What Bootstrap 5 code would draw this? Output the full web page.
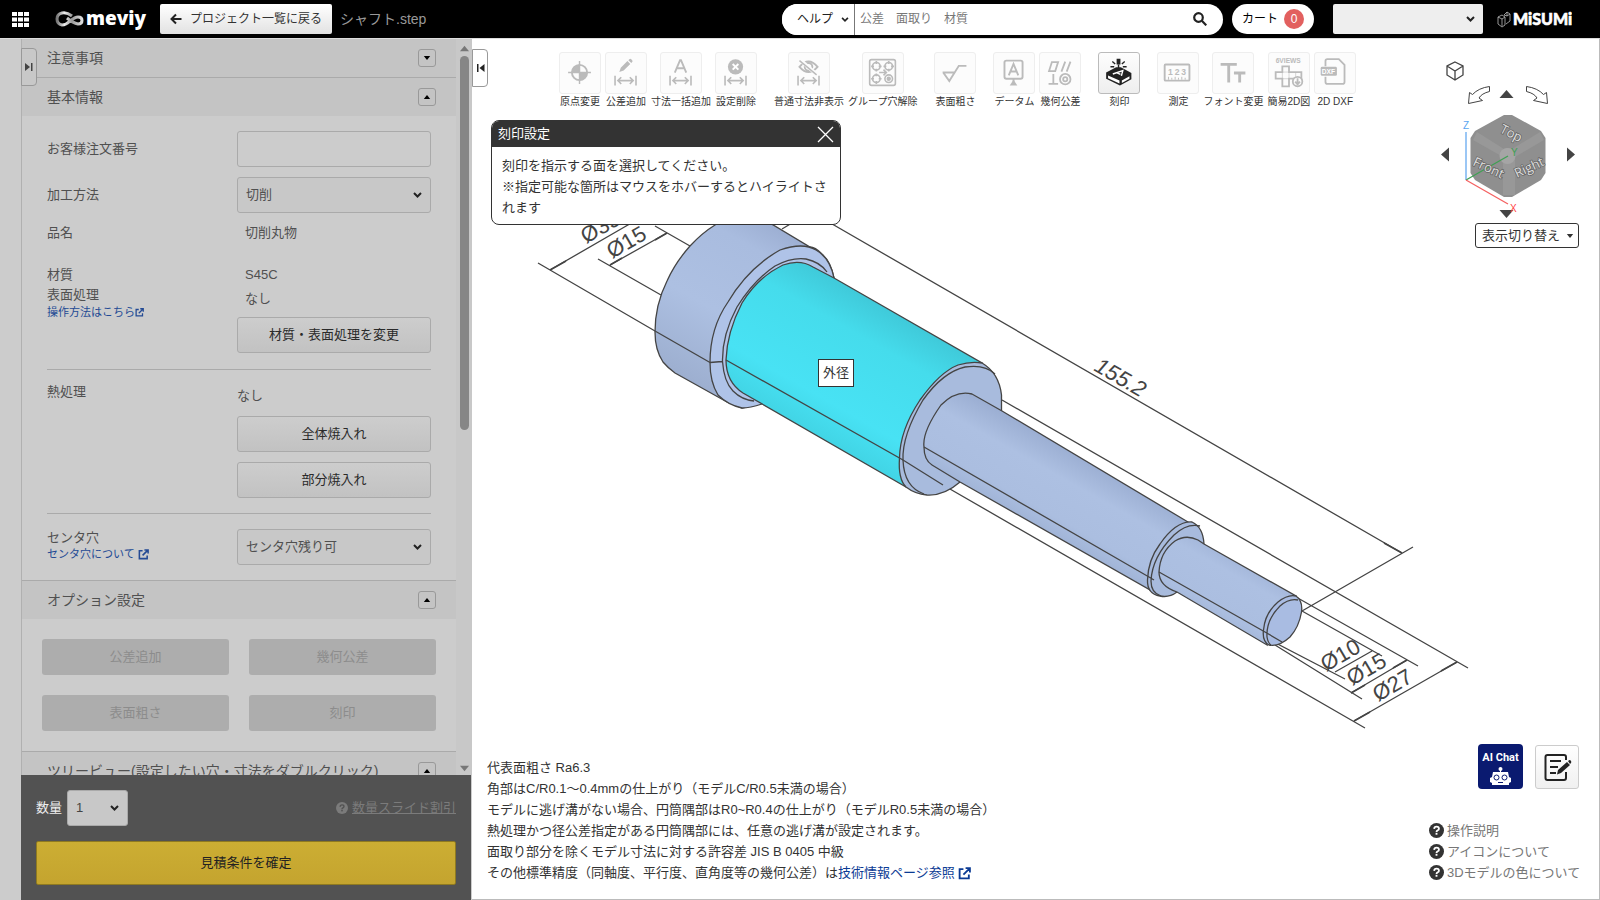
<!DOCTYPE html>
<html lang="ja">
<head>
<meta charset="utf-8">
<meta name="viewport" content="width=device-width, initial-scale=1">
<title>meviy - シャフト.step</title>
<link href="https://cdn.jsdelivr.net/npm/bootstrap@5.3.0/dist/css/bootstrap.min.css" rel="stylesheet">
<style>
body{font-family:"Liberation Sans","Noto Sans CJK JP",sans-serif;font-size:13px;line-height:20px;color:#333;background:#fff}
button,select,input{font-family:inherit}
svg{display:block;flex:none}
.topbar{height:38px;background:#000;padding:0 28px 0 12px}
.brand-logo{margin:0 12px 0 24px}
.back-btn{height:30px;padding:0 10px;font-size:12px;line-height:20px;border:0;border-radius:2px;background:linear-gradient(#fff,#e2e2e2);color:#333}
.file-title{font-size:14px;color:#999}
.search-pill{width:441px;height:31px;border-radius:16px;background:#fff;overflow:hidden;margin-right:9px}
.help-select{width:73px;padding:0 20px 0 15px;border:0;border-right:1px solid #777;border-radius:0;background-color:#fff;font-size:12px;color:#222}
.search-text{padding:0 5px;font-size:12px;color:#333}
.search-text::placeholder{color:#777}
.cart-btn{height:30px;width:82px;border-radius:15px;background:#fff;padding:0 10px;border:0;margin-right:19px;font-size:12px;line-height:20px}
.cart-count{width:20px;height:20px;border-radius:50%;background:#e2605f;color:#fff;font-size:12px;line-height:20px}
.chev{appearance:none;background-repeat:no-repeat;background-position:right 8px center;background-size:9px 6px;background-image:url("data:image/svg+xml,%3Csvg xmlns='http://www.w3.org/2000/svg' viewBox='0 0 9 6'%3E%3Cpath d='M1 1l3.500 3.500L8 1' fill='none' stroke='%23222' stroke-width='2'/%3E%3C/svg%3E")}
.user-select-box{width:150px;height:30px;border-radius:2px;background-color:#eee;margin-right:14px;padding:0 10px}
.help-select.chev{background-position:right 5px center;background-size:8px 5px}
.side-col{flex:0 0 472px;padding-left:21px;background:#ccc;border-top:1px solid #ddd;position:relative}
.side-scroll{border-left:1px solid #b0b0b0;overflow:hidden;min-height:0}
.sec-head{height:39px;border-top:1px solid #aaa;background:#c4c4c4;padding:0 20px 0 25px;font-size:14px;color:#505050}
.sec-head:first-child{height:38px;border-top:0}
.fold-btn{width:18px;height:18px;padding:0;border:1px solid #999;border-radius:3px;background:transparent}
.fold-btn svg{margin:auto}
.sec-body{padding:15px 25px;color:#505050}
.field-stack{gap:10px}
.lab-col{flex:0 0 190px}
.material-row{padding:22px 0 16px}
.heat-row{padding:12px 0 15px}
.center-row{padding-top:15px}
.center-row label{line-height:18px}
.ctl{height:36px;border:1px solid #aaa;border-radius:3px;font-size:13px;line-height:20px;padding:0 8px;width:100%;color:#505050;background-color:#ccc}
.ctl.chev{background-color:#c8c8c8}
.side-btn{color:#2a2a2a;background:linear-gradient(#cdcdcd,#c2c2c2)}
.opt-grid{grid-template-columns:1fr 1fr;gap:20px;padding:20px}
.opt-btn{height:36px;border:0;border-radius:3px;background:#adadad;color:#8c8c8c;font-size:13px;line-height:20px}
.small-link{font-size:11px;line-height:14px;color:#234a94;text-decoration:none;gap:3px}
.small-link.tight{gap:0}
.rule{height:1px;background:#aaa}
.track{width:16px;background:#c8c8c8;padding:6px 0 3px;color:#777}
.thumb{width:9px;height:374px;border-radius:5px;background:#868686;margin:4px 0 auto}
.side-tab,.main-tab{position:absolute;width:16px;height:38px;border:1px solid #999;border-radius:0 4px 4px 0;padding:0}
.side-tab{left:21px;top:9px;background:#c8c8c8}
.main-tab{left:0;top:10px;background:#fff;z-index:3}
.quote-bar{background:#525252;padding:15px;color:#eee;height:125px;margin-right:1px}
.qty-box{width:61px;color:#444;margin-left:5px}
.slide-link{color:#7b7b7b}
.quote-btn{height:44px;border:1px solid #8f7a20;border-radius:2px;background:linear-gradient(#ccae33,#c4a42f);color:#222;font-size:13px;line-height:20px}
.fill-rest{min-height:0}
.viewer{border:1px solid #bbb;border-left:0;border-top-color:#ddd;min-width:0}
.model-canvas{position:absolute;inset:0;width:100%;height:100%}
.tools{padding:13px 0 0 87px;gap:17px;position:relative}
.tools>div{gap:4px}
.tool{background:none;border:0;padding:0;font-size:10px;line-height:15px;color:#333;min-width:42px;white-space:nowrap}
.tool svg{width:42px;height:42px;border:1px solid #eee;border-radius:3px;background:#fcfcfc;color:#bbb;margin:0 auto}
.tool.on svg{border-color:#bbb;background:linear-gradient(#fdfdfd,#eee);color:#222}
.engrave{position:absolute;left:19px;top:81px;width:350px;border:1px solid #333;border-radius:8px;background:#fff;overflow:hidden;z-index:2}
.engrave-head{height:26px;background:#333;color:#fff;padding:0 6px}
.engrave p{padding:8px 10px 6px;line-height:21px}
.part-tip{position:absolute;left:346px;top:320px;width:36px;border:1px solid #333;background:#fff;padding:2px 4px;line-height:22px;z-index:1}
.nav-cube{position:absolute;right:20px;top:12px;width:140px}
.view-btn{height:25px;width:104px;border:1px solid #333;border-radius:3px;background:#fff;font-size:13px;line-height:20px;padding:0 4px 0 6px;color:#333}
.notes{line-height:21px;padding:0 0 16px 15px;position:relative}
.notes a{color:#0b3b94;text-decoration:none}
.corner{padding:0 20px 16px 0;position:relative;gap:31px}
.corner-btns{gap:12px}
.ai-btn{width:45px;height:45px;border:0;border-radius:4px;background:#0a1a70;color:#fff;padding:0}
.memo-btn{width:44px;height:44px;border:1px solid #ccc;border-radius:3px;background:linear-gradient(#fff,#f0f0f0);padding:0}
.guide{width:150px;line-height:21px}
.guide a{color:#777;text-decoration:none;gap:3px;white-space:nowrap}
.guide svg{color:#333}
</style>
</head>
<body class="d-flex flex-column vh-100 overflow-hidden">
<svg class="d-none">
<symbol id="ext" viewBox="0 0 12 12"><path d="M5 2H1.500v8.500H10V7M7 1h4v4M11 1L5 7" fill="none" stroke="currentColor" stroke-width="1.700"/></symbol>
<symbol id="up" viewBox="0 0 8 5"><path d="M0 5L4 0l4 5z" fill="currentColor"/></symbol>
<symbol id="down" viewBox="0 0 8 5"><path d="M0 0l4 5 4-5z" fill="currentColor"/></symbol>
<symbol id="help" viewBox="0 0 16 16"><circle cx="8" cy="8" r="8" fill="currentColor"/><path d="M5.500 6.300q.1-2.500 2.600-2.500t2.500 2.200q0 1.100-1.300 1.800T8 9.500" fill="none" stroke="var(--q,#fff)" stroke-width="1.900"/><rect x="7" y="10.500" width="2" height="2" fill="var(--q,#fff)"/></symbol>
<symbol id="span" viewBox="0 0 42 42"><path d="M9.500 24v10M31.500 24v10M12 29h17M16 25.500L12.500 29l3.500 3.500M25 25.500l3.500 3.500-3.500 3.500" fill="none" stroke="currentColor" stroke-width="1.700"/></symbol>
</svg>

<header class="topbar d-flex align-items-center flex-shrink-0">
<svg width="17" height="15" viewBox="0 0 17 15" fill="#fff"><path d="M0 0h5v4H0zM6 0h5v4H6zM12 0h5v4h-5zM0 5.500h5v4H0zM6 5.500h5v4H6zM12 5.500h5v4h-5zM0 11h5v4H0zM6 11h5v4H6zM12 11h5v4h-5z"/></svg>
<svg class="brand-logo" width="95" height="30" viewBox="53 4 95 30"><defs><linearGradient id="lg"><stop stop-color="#777"/><stop offset=".3" stop-color="#eee"/><stop offset=".6" stop-color="#999"/><stop offset="1" stop-color="#ddd"/></linearGradient></defs><path d="M72 16q-5-4-10-3-5 1-5 6t5 6q4 0 8-4 5-4 8-4 4 0 4 3.500T78 24q-5-1-11-6" fill="none" stroke="url(#lg)" stroke-width="3"/><text x="86" y="25" fill="#fff" font-family="Open Sans" font-size="19" font-weight="800">meviy</text></svg>
<button class="back-btn d-flex align-items-center gap-2" type="button"><svg width="12" height="12" viewBox="0 0 12 12"><path d="M11.500 6H2M6 1.500L1.500 6 6 10.500" fill="none" stroke="#222" stroke-width="2"/></svg>プロジェクト一覧に戻る</button>
<span class="file-title ms-2">シャフト.step</span>
<form class="search-pill d-flex align-items-center ms-auto">
<select class="help-select chev h-100" aria-label="ヘルプ"><option>ヘルプ</option></select>
<input class="search-text border-0 h-100 flex-grow-1" aria-label="検索" placeholder="公差　面取り　材質">
<button type="button" class="border-0 bg-transparent p-0 me-3" aria-label="検索"><svg width="14" height="14" viewBox="0 0 14 14" fill="none" stroke="#222" stroke-width="2.200"><circle cx="5.500" cy="5.500" r="4.300"/><path d="M8.800 8.800l4.500 4.500"/></svg></button>
</form>
<button type="button" class="cart-btn d-flex align-items-center justify-content-between">カート<span class="cart-count">0</span></button>
<select class="user-select-box chev border-0" aria-label="ユーザー"><option></option></select>
<svg width="75" height="18" viewBox="0 0 75 18"><g fill="none" stroke="#bbb" stroke-width=".8"><path d="M1 7l4-2 3 2v8l-3 2-4-3zM5 9v7M1 7l4 2 3-2M7 5l3-3 3 2v7l-4 3M10 6V2M7 5l3 1 3-2"/></g><text x="16" y="15" fill="#fff" stroke="#fff" stroke-width=".6" font-family="Lato" font-size="16" font-weight="900">MiSUMi</text></svg>
</header>

<div class="d-flex flex-grow-1 fill-rest">
<aside class="side-col d-flex flex-column">
<button class="side-tab" type="button" aria-label="折りたたむ"><svg class="mx-auto" width="8" height="8" viewBox="0 0 8 8" fill="#444"><path d="M0 0l5 4-5 4zM6 0h1.500v8H6z"/></svg></button>
<div class="d-flex flex-grow-1 fill-rest">
<div class="side-scroll flex-grow-1">
<div class="sec-head d-flex align-items-center justify-content-between">注意事項<button class="fold-btn" type="button" aria-label="開く"><svg width="8" height="4"><use href="#down"/></svg></button></div>
<div class="sec-head d-flex align-items-center justify-content-between">基本情報<button class="fold-btn" type="button" aria-label="閉じる"><svg width="8" height="4"><use href="#up"/></svg></button></div>
<div class="sec-body">
<div class="field-stack d-flex flex-column">
<div class="d-flex align-items-center"><label class="lab-col" for="orderNo">お客様注文番号</label><input id="orderNo" class="ctl"></div>
<div class="d-flex align-items-center"><label class="lab-col" for="method">加工方法</label><select id="method" class="ctl chev"><option>切削</option></select></div>
<div class="d-flex"><span class="lab-col">品名</span><span class="ps-2">切削丸物</span></div>
</div>
<div class="material-row d-flex">
<div class="lab-col"><div>材質</div><div>表面処理</div><a href="#" class="small-link tight d-flex align-items-center">操作方法はこちら<svg width="9" height="9"><use href="#ext"/></svg></a></div>
<div class="flex-grow-1"><div class="ps-2">S45C</div><div class="ps-2 pt-1">なし</div><button class="ctl side-btn mt-2" type="button">材質・表面処理を変更</button></div></div>
<div class="rule"></div>
<div class="heat-row d-flex">
<div class="lab-col">熱処理</div>
<div class="field-stack d-flex flex-column flex-grow-1"><div class="pt-1">なし</div><button class="ctl side-btn" type="button">全体焼入れ</button><button class="ctl side-btn" type="button">部分焼入れ</button></div></div>
<div class="rule"></div>
<div class="center-row d-flex"><div class="lab-col"><label for="center" class="d-block">センタ穴</label><a href="#" class="small-link d-flex align-items-center">センタ穴について<svg width="11" height="11"><use href="#ext"/></svg></a></div>
<select id="center" class="ctl chev"><option>センタ穴残り可</option></select></div>
</div>
<div class="sec-head d-flex align-items-center justify-content-between">オプション設定<button class="fold-btn" type="button" aria-label="閉じる"><svg width="8" height="4"><use href="#up"/></svg></button></div>
<div class="opt-grid d-grid">
<button class="opt-btn" disabled>公差追加</button><button class="opt-btn" disabled>幾何公差</button><button class="opt-btn" disabled>表面粗さ</button><button class="opt-btn" disabled>刻印</button></div>
<div class="sec-head d-flex align-items-center justify-content-between">ツリービュー(設定したい穴・寸法をダブルクリック)<button class="fold-btn" type="button" aria-label="閉じる"><svg width="8" height="4"><use href="#up"/></svg></button></div>
</div>
<div class="track d-flex flex-column align-items-center"><svg width="9" height="7"><use href="#up"/></svg><div class="thumb"></div><svg width="9" height="7"><use href="#down"/></svg></div>
</div>
<div class="quote-bar d-flex flex-column flex-shrink-0 justify-content-between">
<div class="d-flex align-items-center"><label for="qty">数量</label><select id="qty" class="ctl chev qty-box"><option>1</option></select>
<a href="#" class="slide-link ms-auto d-flex align-items-center gap-1"><svg width="12" height="12" style="--q:#525252"><use href="#help"/></svg>数量スライド割引</a></div>
<button class="quote-btn w-100" type="button">見積条件を確定</button>
</div>
</aside>

<main class="viewer position-relative flex-grow-1 d-flex flex-column">
<svg class="model-canvas" viewBox="472 39 1127 860" preserveAspectRatio="xMinYMin meet" fill="none" stroke="#444" stroke-width="1.300">
<defs>
<linearGradient id="gh" gradientUnits="userSpaceOnUse" x1="770" y1="215" x2="680" y2="375"><stop stop-color="#9aacd0"/><stop offset=".2" stop-color="#a9bcdf"/><stop offset=".6" stop-color="#adc0e2"/><stop offset="1" stop-color="#9dafd0"/></linearGradient>
<linearGradient id="gc" gradientUnits="userSpaceOnUse" x1="905" y1="315" x2="825" y2="455"><stop stop-color="#3fc8d8"/><stop offset=".25" stop-color="#45dcec"/><stop offset=".7" stop-color="#48e2f4"/><stop offset="1" stop-color="#3fd0e0"/></linearGradient>
<linearGradient id="gs" gradientUnits="userSpaceOnUse" x1="1086" y1="460" x2="1041" y2="540"><stop stop-color="#9cafd3"/><stop offset=".3" stop-color="#adc0e2"/><stop offset=".7" stop-color="#abbee0"/><stop offset="1" stop-color="#9bafd2"/></linearGradient>
</defs>
<!-- extension and dimension lines -->
<path d="M538 263l117 68M598 259l63 36M550 270l90-52M610 265l57-32M655 226l35 20M782 229l20-12M820 217l582 336M1413 547L1302 611M1002 400l466 268M1302 611l80 45M1296 597l122 69M1335 672l37-21M1351 693l56-33M1354 721l103-59M943 485l422 243M1270 640l75 39M1275 645l87 54"/>
<path d="M550 270l16-9M610 265l12-7M655 240l12-7M1402 553l-18-10M1354 721l16-9M1457 662l-16 9M1351 693l14-8M1407 660l-14 8" stroke-width="1.600"/>
<!-- head -->
<path d="M715 225Q702 233 690 246Q675 263 667 281Q655 305 655 332Q655 350 663 362Q668 368 675 373L727 402L742 408L760 404L834 278Q831 262 822 254Q815 247 810 247L760 217H725z" fill="url(#gh)"/>
<path d="M710 362.500Q710 328 728 302Q748 268 780 250Q803 242 816 250Q830 258 834 278L762 404Q750 408 742 408Q728 405 718 395Q710 382 710 362.500z" fill="#afc3e8"/>
<path d="M722.500 361.500Q722 335 737 307Q754 280 775 266Q792 257 806 259Q820 262 827 272M722.500 361.500Q724 382 733 391Q742 400 754 401M710 362.500l12-1" />
<path d="M655 331l55 31.500"/>
<!-- highlighted outer diameter -->
<path d="M726 360Q727 332 742 303Q758 277 783 265Q800 259 813 267L834 278L982 363L960 372L900 455L906 487L743 393Q726 382 726 360z" fill="url(#gc)"/>
<path d="M982 363Q999 373 1001.500 395V412L960 482Q944 496 927 495Q915 494 906 487Q898 479 899.500 458Q900 430 920 400Q940 372 958 365Q971 361 982 363z" fill="#a8bbdd"/>
<path d="M903 460Q902 435 923 400Q943 372 965 367Q985 364 995 374M903 460Q904 487 924 494"/>
<path d="M726 360l177 100l40 25"/>
<!-- long shaft -->
<path d="M924 447Q922 432 941 405Q956 390 972 394L1002 411L1188 522L1178 530L1148 580L1152 591L960 482L932 465Q924 460 924 447z" fill="url(#gs)"/>
<path d="M1192 522Q1203 527 1204 544L1177 592Q1169 598 1160 596Q1147 594 1147.500 580Q1148 560 1160 544Q1176 521 1192 522z" fill="#a8bbdd"/>
<path d="M1200 526Q1187 523 1174 535Q1152 557 1151 581Q1151 593 1161 596M924 447l225 130l5 3"/>
<!-- end shaft -->
<path d="M1159 572Q1160 552 1175 541Q1186 534 1198 540L1204 544L1296 596L1264 634L1267 645L1177 592Q1159 586 1159 572z" fill="url(#gs)"/>
<path d="M1296 596Q1303 601 1301.500 612Q1299 627 1290 637Q1279 647 1269 645Q1262 641 1263.500 630Q1265 613 1278 602Q1288 594 1296 596z" fill="#a9bce2"/>
<path d="M1298 600Q1289 598 1280 606Q1266 620 1267 637Q1268 643 1271 645M1159 572l106 60l17 10"/>
<g fill="#444" stroke="none" font-family="Liberation Sans" font-size="22">
<text transform="translate(1093 370) rotate(30)" font-style="italic">155.2</text>
<text transform="translate(586 244) rotate(-30)">Ø35</text>
<text transform="translate(612 259) rotate(-30)">Ø15</text>
<text transform="translate(1326 672) rotate(-30)">Ø10</text>
<text transform="translate(1352 686) rotate(-30)">Ø15</text>
<text transform="translate(1378 702) rotate(-30)">Ø27</text>
</g>
</svg>
<button class="main-tab" type="button" aria-label="パネルを閉じる"><svg width="8" height="8" viewBox="0 0 8 8" fill="#222" class="ms-1"><path d="M7.500 0v8l-5-4zM0 0h1.500v8H0z"/></svg></button>

<div class="tools d-flex">
<div class="d-flex">
<button class="tool" disabled><svg viewBox="0 0 42 42"><circle cx="20.500" cy="20.500" r="8" fill="none" stroke="currentColor" stroke-width="2"/><path d="M20.500 20.500v-8a8 8 0 0 0-8 8zM20.500 20.500v8a8 8 0 0 0 8-8z" fill="currentColor"/><path d="M20.500 8.500v24M8.500 20.500h24" stroke="currentColor" stroke-width="1.500"/></svg>原点変更</button>
<button class="tool" disabled><svg viewBox="0 0 42 42"><use href="#span"/><path d="M14 20l1.500-4.500 7-7 3 3-7 7zM23.500 7.500l1-1q1-.7 2 0l1 1q.8 1 0 2l-1 1z" fill="currentColor"/></svg>公差追加</button>
<button class="tool" disabled><svg viewBox="0 0 42 42"><use href="#span"/><path d="M14.500 20.500l5.500-13h1l5.500 13M16.500 16h8" fill="none" stroke="currentColor" stroke-width="2"/></svg>寸法一括追加</button>
<button class="tool" disabled><svg viewBox="0 0 42 42"><use href="#span"/><circle cx="20.500" cy="14.500" r="8" fill="currentColor"/><path d="M17.500 11.500l6 6M23.500 11.500l-6 6" stroke="#fff" stroke-width="2"/></svg>設定削除</button>
</div>
<div class="d-flex">
<button class="tool" disabled><svg viewBox="0 0 42 42"><use href="#span"/><path d="M11 14.500q9.500-11 19 0q-9.500 11-19 0z" fill="none" stroke="currentColor" stroke-width="2"/><circle cx="20.500" cy="14.500" r="4" fill="none" stroke="currentColor" stroke-width="2"/><path d="M12 7.500l17 15" stroke="#fcfcfc" stroke-width="4"/><path d="M11 8l18 15" stroke="currentColor" stroke-width="1.500"/></svg>普通寸法非表示</button>
<button class="tool" disabled><svg viewBox="0 0 42 42" fill="none" stroke="currentColor" stroke-width="1.700"><rect x="7" y="7" width="27" height="27" rx="2"/><circle cx="14" cy="14" r="4"/><circle cx="27" cy="14" r="4"/><circle cx="14" cy="27" r="4"/><circle cx="27" cy="27" r="4"/><circle cx="27" cy="27" r="1.500" fill="currentColor"/><path d="M14 8.500v3M14 16.500v3M8.500 14h3M16.500 14h3M27 8.500v3M27 16.500v3M21.500 14h3M29.500 14h3M14 21.500v3M14 29.500v3M8.500 27h3M16.500 27h3M17 20.500h7M21.500 17.500l3 3-3 3"/></svg>グループ穴解除</button>
</div>
<div class="d-flex"><button class="tool" disabled><svg viewBox="0 0 42 42" fill="none" stroke="currentColor" stroke-width="2"><path d="M8 20.500h12.500M9 21l6 8.500L25 13.500h8"/></svg>表面粗さ</button></div>
<div class="d-flex">
<button class="tool" disabled><svg viewBox="0 0 42 42" fill="none" stroke="currentColor" stroke-width="2"><rect x="11" y="8" width="19" height="19" rx="2"/><path d="M15.500 23.500l5-12 5 12M17 19.500h7M20.500 27v4"/><path d="M20.500 28l4 6h-8z" fill="currentColor" stroke="none"/></svg>データム</button>
<button class="tool" disabled><svg viewBox="0 0 42 42" fill="none" stroke="currentColor" stroke-width="1.900"><path d="M12.500 9.500H19l-3 9.500H9.500zM26.500 9l-4 10.500M32 9l-4 10.500M14 22v10M9 32.500h10"/><circle cx="26.500" cy="27.500" r="5.500"/><circle cx="26.500" cy="27.500" r="2.200"/></svg>幾何公差</button>
</div>
<div class="d-flex"><button class="tool on"><svg viewBox="0 0 42 42" fill="none" stroke="currentColor" stroke-width="2"><path d="M20.500 6v6" stroke-width="4"/><path d="M20.500 12v4M14 9l3 2.500M27 9l-3 2.500M12 14.500h4M29 14.500h-4" stroke-width="1.500"/><path d="M18 15l-10.500 5.500v6.500L22 34l12-6.500v-6.500L23 15z" fill="currentColor" stroke="none"/><path d="M9.500 23.500l12 5.500v3l-12-5.500zM24 29l8-4.500v2.500l-8 4.500z" fill="#fff" stroke="none"/><path d="M14.500 22l10.500-3.500-1.500 5.500M18.500 20.500l4 2" stroke="#fff" stroke-width="1.500"/></svg>刻印</button></div>
<div class="d-flex">
<button class="tool" disabled><svg viewBox="0 0 42 42" fill="none" stroke="currentColor" stroke-width="2"><rect x="7" y="12" width="26" height="17" rx="1"/><path d="M11 28v-3M14.500 28v-2M18 28v-3M21.500 28v-2M25 28v-3M28.500 28v-2" stroke-width="1"/><g font-size="9" font-weight="bold" fill="currentColor" stroke="none"><text x="10.500" y="23">1</text><text x="17.500" y="23">2</text><text x="24.500" y="23">3</text></g></svg>測定</button>
<button class="tool" disabled><svg viewBox="0 0 42 42" fill="none" stroke="currentColor" stroke-width="3"><path d="M8 12h17M16.500 12v19M22 21h12M28 21v10"/></svg>フォント変更</button>
<button class="tool" disabled><svg viewBox="0 0 42 42" fill="none" stroke="currentColor" stroke-width="1.900"><text x="7" y="11" font-size="7" font-weight="bold" fill="currentColor" stroke="none">6VIEWS</text><path d="M14 14h7v6h13v7H21v8h-7v-8H7v-7h7z"/><path d="M14 20h7v7h-7zM28 20v5" stroke-width="1" opacity=".6"/><circle cx="30" cy="30" r="5" fill="#fcfcfc"/><path d="M30 26.500v6M27.500 30l2.500 3 2.500-3" /></svg>簡易2D図</button>
<button class="tool" disabled><svg viewBox="0 0 42 42" fill="none" stroke="currentColor" stroke-width="1.900"><path d="M11 14V8.500q0-2 2-2h12l6 6v18q0 2-2 2H13q-2 0-2-2V25"/><rect x="6" y="14.500" width="17" height="9.500" rx="1.500" fill="currentColor" stroke="none"/><text x="7" y="22" font-size="7" font-weight="bold" fill="#fff" stroke="none">DXF</text></svg>2D DXF</button>
</div>
</div>

<section class="engrave">
<div class="engrave-head d-flex align-items-center justify-content-between">刻印設定<button type="button" class="border-0 bg-transparent p-0" aria-label="閉じる"><svg width="17" height="17" viewBox="0 0 17 17"><path d="M1 1l15 15M16 1L1 16" stroke="#fff" stroke-width="1.300"/></svg></button></div>
<p class="m-0">刻印を指示する面を選択してください。<br>※指定可能な箇所はマウスをホバーするとハイライトされます</p>
</section>
<div class="part-tip">外径</div>

<div class="nav-cube d-flex flex-column align-items-end">
<svg width="140" height="172" viewBox="1440 51 140 172" fill="none" stroke="#444" stroke-width="1.300">
<path d="M1456 62l8 4v9l-8 5-8-5v-9zM1448 66l8 5 8-5M1456 71v9"/>
<path d="M1490.500 86.500v5q-8 2-10.500 6.500l3.500 2.500-14 3 1-11 3 2q6-6.500 17-8zM1527.500 86.500v5q8 2 10.500 6.500l-3.500 2.500 14 3-1-11-3 2q-6-6.500-17-8z" fill="#fff" stroke-width="1"/>
<path d="M1507.500 90l7 8h-14zM1507.500 218l7-8h-14zM1442 154.500l8-7v14zM1576 154.500l-8-7v14z" fill="#444" stroke="none"/>
<path d="M1505 115h8l29 16 4.500 7v35l-4.500 7-29 17h-8l-29-17-4.500-7v-35l4.500-7z" fill="#8f8f8f" stroke="none"/>
<path d="M1478 132l27 17q4-2 8 0l28-17 4 8-29 17v38h-12v-38l-30-17z" fill="#9a9a9a" stroke="none" opacity=".8"/><circle cx="1508.500" cy="156" r="8" fill="#a5a5a5" stroke="none"/>
<path d="M1467 180v-48" stroke="#9bc7f5" stroke-width="2"/><path d="M1467 180l42-24" stroke="#3fa053"/><path d="M1467 180l42 24" stroke="#f46060"/>
<g fill="#ddd" stroke="#666" stroke-width="1.500" paint-order="stroke" font-family="Open Sans" font-size="13"><text transform="translate(1500 132) rotate(27)">Top</text><text transform="translate(1473 165) rotate(25)">Front</text><text transform="translate(1518 178) rotate(-25)">Right</text></g>
<g font-family="Liberation Sans" font-size="10" stroke="none"><text x="1464" y="129" fill="#5aa5f0">Z</text><text x="1512" y="156" fill="#3fa053">Y</text><text x="1511" y="212" fill="#f44">X</text></g>
</svg>
<button class="view-btn d-flex align-items-center justify-content-between" type="button">表示切り替え<svg width="8" height="4"><use href="#down"/></svg></button>
</div>

<div class="mt-auto d-flex justify-content-between align-items-end">
<div class="notes">代表面粗さ Ra6.3<br>角部はC/R0.1～0.4mmの仕上がり（モデルC/R0.5未満の場合）<br>モデルに逃げ溝がない場合、円筒隅部はR0~R0.4の仕上がり（モデルR0.5未満の場合）<br>熱処理かつ径公差指定がある円筒隅部には、任意の逃げ溝が設定されます。<br>面取り部分を除くモデル寸法に対する許容差 JIS B 0405 中級<br>その他標準精度（同軸度、平行度、直角度等の幾何公差）は<a href="#">技術情報ページ参照 <svg class="d-inline-block" width="13" height="13"><use href="#ext"/></svg></a></div>
<div class="corner d-flex flex-column align-items-end">
<div class="corner-btns d-flex align-items-end">
<button class="ai-btn" type="button" aria-label="AI Chat"><svg width="45" height="45" viewBox="0 0 45 45"><text x="22.500" y="17" text-anchor="middle" fill="#fff" font-family="Roboto" font-weight="bold" font-size="11">AI Chat</text><g fill="#fff"><circle cx="22.500" cy="25" r="2"/><rect x="22" y="26" width="1" height="4"/><path d="M15 28h15l1 5 2 1v4l-2 1v2H14v-2l-2-1v-4l2-1z"/></g><g fill="none" stroke="#0a1a70"><circle cx="18.500" cy="33.500" r="2.500"/><circle cx="26.500" cy="33.500" r="2.500"/><path d="M20 38.500h5"/></g></svg></button>
<button class="memo-btn" type="button" aria-label="メモ"><svg width="42" height="42" viewBox="0 0 42 42" fill="none" stroke="#222" stroke-width="2"><path d="M30 14v-3q0-2-2-2H11.500q-2 0-2 2v21q0 2 2 2H28q2 0 2-2v-6M14 15h11M14 21h8M14 27h6"/><path d="M21 28.500l1-4.500 9-8 3 3-9 8zM32 15l1.500-1q1 0 1.500 1t0 2l-1 1z" fill="#222" stroke="none"/></svg></button>
</div>
<div class="guide">
<a href="#" class="d-flex align-items-center"><svg width="15" height="15"><use href="#help"/></svg>操作説明</a>
<a href="#" class="d-flex align-items-center"><svg width="15" height="15"><use href="#help"/></svg>アイコンについて</a>
<a href="#" class="d-flex align-items-center"><svg width="15" height="15"><use href="#help"/></svg>3Dモデルの色について</a>
</div>
</div>
</div>
</main>
</div>
<script src="https://cdn.jsdelivr.net/npm/bootstrap@5.3.0/dist/js/bootstrap.bundle.min.js"></script>
</body>
</html>
